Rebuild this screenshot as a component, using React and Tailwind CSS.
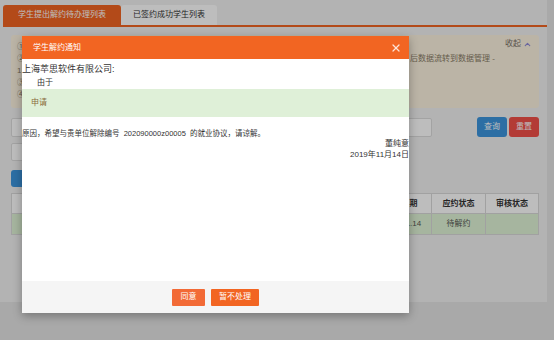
import { X, ChevronUp } from "lucide-react";

const font = { fontFamily: '"Liberation Sans", "Noto Sans CJK SC", sans-serif' };

export default function App() {
  return (
    <div
      className="relative h-[340px] w-[554px] overflow-hidden bg-[#e4e4e4] text-[#333]"
      style={font}
    >
      <Page />
      {/* modal backdrop */}
      <div className="absolute inset-0 bg-[rgba(0,0,0,0.26)]" />
      <Dialog />
    </div>
  );
}

function Page() {
  return (
    <div className="h-[302px] w-[547px] bg-[#f2f2f2] pl-[3px] pt-[5px]">
      <div className="flex h-[22px] w-[544px] border-b-2 border-[#f26522]">
        <div className="flex w-[118px] items-center justify-center whitespace-nowrap rounded-t-[3px] bg-[#f26522] text-[8px] text-white">
          学生提出解约待办理列表
        </div>
        <div className="flex w-[96px] items-center justify-center whitespace-nowrap rounded-t-[3px] bg-white text-[8px] text-[#333]">
          已签约成功学生列表
        </div>
      </div>

      <div className="px-[8px] pt-[8px]">
        <div className="relative h-[73px] w-[528px] rounded-[3px] bg-[#fcf3e1] pl-[6px] pt-[6px] text-[8px] leading-[12px] whitespace-nowrap text-[#8a7d66]">
          <div className="absolute right-[7px] top-[3px] flex items-center gap-[2px] text-[#7a7066]">
            收起 <ChevronUp size={9} strokeWidth={3} className="text-[#8f8ad6]" />
          </div>
          <p>①</p>
          <div className="flex">
            <span className="w-[393px]">②</span>
            <span>后数据流转到数据管理 -</span>
          </div>
          <p>1</p>
          <p>③</p>
          <p>④</p>
        </div>

        <div className="mt-[9px] flex h-[20px] items-center">
          <div className="h-[19px] w-[190px] rounded-[2px] border border-[#dcdcdc] bg-white" />
          <div className="ml-[31px] h-[19px] w-[200px] rounded-[2px] border border-[#dcdcdc] bg-white" />
          <button className="ml-[45px] flex h-[20px] w-[30px] items-center justify-center rounded-[3px] bg-[#3c95de] text-[8px] text-white">
            查询
          </button>
          <button className="ml-[2px] flex h-[20px] w-[30px] items-center justify-center rounded-[3px] bg-[#f2504a] text-[8px] text-white">
            重置
          </button>
        </div>

        <div className="mt-[6px] h-[18px] w-[190px] rounded-[2px] border border-[#dcdcdc] bg-white" />

        <button className="mt-[9px] flex h-[17px] w-[40px] items-center justify-center rounded-[3px] bg-[#3c95de] text-[8px] text-white">
          新增
        </button>

        <table className="mt-[6px] w-[528px] border-collapse text-[8px] text-[#333]">
          <thead>
            <tr className="h-[20px] bg-white">
              <th className="w-[60px] border border-[#d9d9d9] font-bold">学号</th>
              <th className="w-[110px] border border-[#d9d9d9] font-bold">姓名</th>
              <th className="border border-[#d9d9d9] font-bold">协议编号</th>
              <th className="w-[60px] border border-[#d9d9d9] font-bold">申请日期</th>
              <th className="w-[54px] border border-[#d9d9d9] font-bold">应约状态</th>
              <th className="w-[53px] border border-[#d9d9d9] font-bold">审核状态</th>
            </tr>
          </thead>
          <tbody>
            <tr className="h-[21px] bg-[#e1f5d7] text-[#555]">
              <td className="border border-[#d9d9d9] text-center">1</td>
              <td className="border border-[#d9d9d9] text-center">董纯意</td>
              <td className="border border-[#d9d9d9] text-center">202090000z00005</td>
              <td className="border border-[#d9d9d9] text-center">2019.11.14</td>
              <td className="border border-[#d9d9d9] text-center">待解约</td>
              <td className="border border-[#d9d9d9] text-center"></td>
            </tr>
          </tbody>
        </table>
      </div>
    </div>
  );
}

function Dialog() {
  return (
    <div className="absolute left-[22px] top-[36px] flex h-[277px] w-[387px] flex-col bg-white shadow-[0_3px_9px_rgba(0,0,0,0.3)]">
      <div className="flex h-[23px] shrink-0 items-center justify-between bg-[#f26522] pl-[11px] pr-[7px] text-[8px] text-white">
        <span>学生解约通知</span>
        <X size={12} strokeWidth={2.5} className="text-[#fde3d6]" />
      </div>

      <div className="flex-1 overflow-hidden">
        <p className="pt-[3px] text-[9px] leading-[14px] text-[#333]">上海萃思软件有限公司:</p>
        <p className="pl-[15px] text-[8px] leading-[13px] text-[#333]">由于</p>
        <div className="flex h-[28px] items-center bg-[#dff0d8] pl-[9px] text-[8px] text-[#8a6d3b]">
          申请
        </div>
        <p className="mt-[12px] whitespace-nowrap text-[7.5px] leading-[10px] text-[#333]">
          原因，希望与贵单位解除编号&nbsp;&nbsp;202090000z00005&nbsp;&nbsp;的就业协议，请谅解。
        </p>
        <div className="-mt-[1px] text-right text-[8px] leading-[11px] text-[#333]">
          <p>董纯意</p>
          <p>2019年11月14日</p>
        </div>
      </div>

      <div className="flex h-[32px] shrink-0 items-center justify-center gap-[6px] bg-[#f5f5f5]">
        <button className="flex h-[17px] w-[33px] items-center justify-center rounded-[1px] bg-[#f26a36] text-[8px] text-white">
          同意
        </button>
        <button className="flex h-[17px] w-[48px] items-center justify-center rounded-[1px] bg-[#f26522] text-[8px] text-white">
          暂不处理
        </button>
      </div>
    </div>
  );
}
